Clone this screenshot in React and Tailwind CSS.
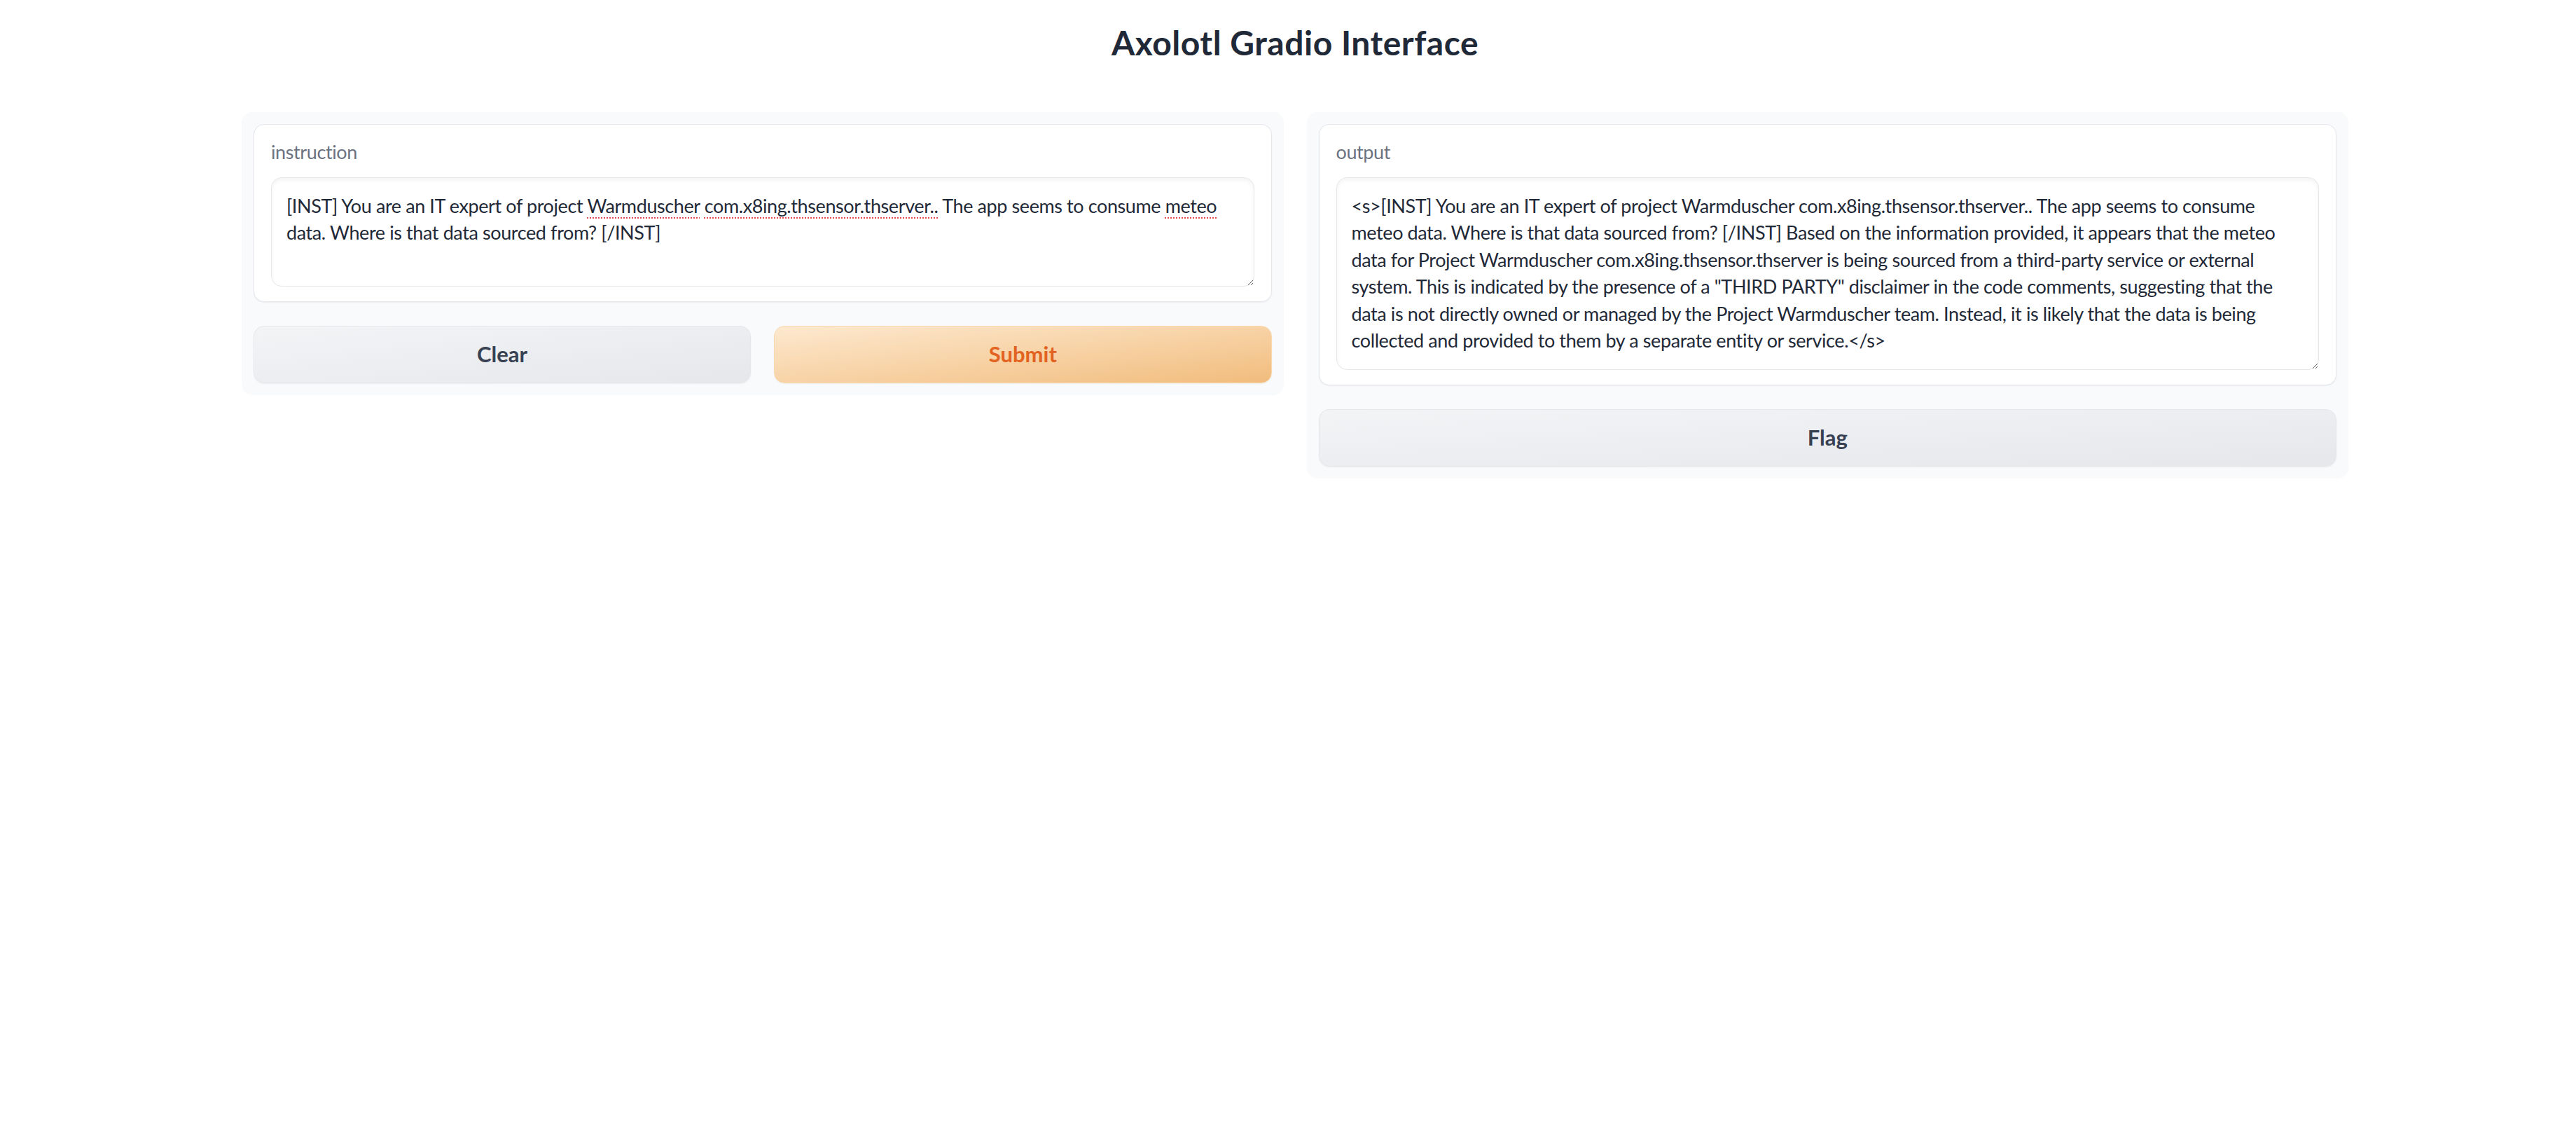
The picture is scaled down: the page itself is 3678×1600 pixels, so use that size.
import React from 'react'

const instructionLines = [
  [
    '[INST] You are an IT expert of project ',
    { bad: 'Warmduscher' },
    ' ',
    { bad: 'com.x8ing.thsensor.thserver..' },
    ' The app seems to consume ',
    { bad: 'meteo' },
  ],
  ['data. Where is that data sourced from? [/INST]'],
]

const outputLines = [
  '<s>[INST] You are an IT expert of project Warmduscher com.x8ing.thsensor.thserver.. The app seems to consume',
  'meteo data. Where is that data sourced from? [/INST] Based on the information provided, it appears that the meteo',
  'data for Project Warmduscher com.x8ing.thsensor.thserver is being sourced from a third-party service or external',
  'system. This is indicated by the presence of a "THIRD PARTY" disclaimer in the code comments, suggesting that the',
  'data is not directly owned or managed by the Project Warmduscher team. Instead, it is likely that the data is being',
  'collected and provided to them by a separate entity or service.</s>',
]

function Field({ label, height, children }) {
  return (
    <div className="rounded-[15px] border border-[#e5e7eb] bg-white px-[24px] pt-[20px] pb-[21px] shadow-[0_1px_2px_rgba(0,0,0,0.06)]">
      <div className="mb-[17px] text-[27px] leading-[38px] text-[#6b7280]">{label}</div>
      <div
        className={`resize-y overflow-hidden rounded-[15px] border border-[#e5e7eb] bg-white px-[21px] pt-[21px] text-[27px] leading-[38.5px] text-[#1f2937] shadow-[inset_0_3px_6px_rgba(0,0,0,0.05)] ${height}`}
      >
        {children}
      </div>
    </div>
  )
}

function Btn({ variant = 'secondary', children }) {
  const look =
    variant === 'primary'
      ? 'border-[#f9d9b0] bg-linear-to-br from-[#fde9cf] to-[#f1bc7c] text-[#e2621f]'
      : 'border-[#e5e7eb] bg-linear-to-br from-[#f3f4f6] to-[#e5e7eb] text-[#374151]'
  return (
    <button
      className={`flex h-[82px] flex-1 items-center justify-center rounded-[15px] border text-[31px] font-bold tracking-[0px] shadow-[0_1px_2px_rgba(0,0,0,0.05)] ${look}`}
    >
      {children}
    </button>
  )
}

export default function App() {
  return (
    <div className="min-h-screen bg-white pl-[345px] pr-[325px] font-[family-name:Lato,sans-serif] tracking-[-0.4px]">
      <h1 className="pt-[32px] text-center text-[48px] leading-[1.2] font-bold tracking-[0.5px] text-[#1f2937]">
        Axolotl Gradio Interface
      </h1>

      <div className="mt-[70px] flex items-start gap-[33px]">
        <div className="flex flex-1 flex-col gap-[34px] rounded-[15px] bg-[#f9fafb] p-[17px]">
          <Field label="instruction" height="h-[156px]">
            {instructionLines.map((parts, i) => (
              <div key={i} className="whitespace-nowrap">
                {parts.map((p, j) =>
                  typeof p === 'string' ? (
                    <span key={j}>{p}</span>
                  ) : (
                    <span
                      key={j}
                      className="underline decoration-[#e5484d] decoration-dotted decoration-2 underline-offset-[7px]"
                    >
                      {p.bad}
                    </span>
                  )
                )}
              </div>
            ))}
          </Field>
          <div className="flex gap-[33px]">
            <Btn>Clear</Btn>
            <Btn variant="primary">Submit</Btn>
          </div>
        </div>

        <div className="flex flex-1 flex-col gap-[34px] rounded-[15px] bg-[#f9fafb] p-[17px]">
          <Field label="output" height="h-[275px]">
            {outputLines.map((line, i) => (
              <div key={i} className="whitespace-nowrap">
                {line}
              </div>
            ))}
          </Field>
          <div className="flex">
            <Btn>Flag</Btn>
          </div>
        </div>
      </div>
    </div>
  )
}
